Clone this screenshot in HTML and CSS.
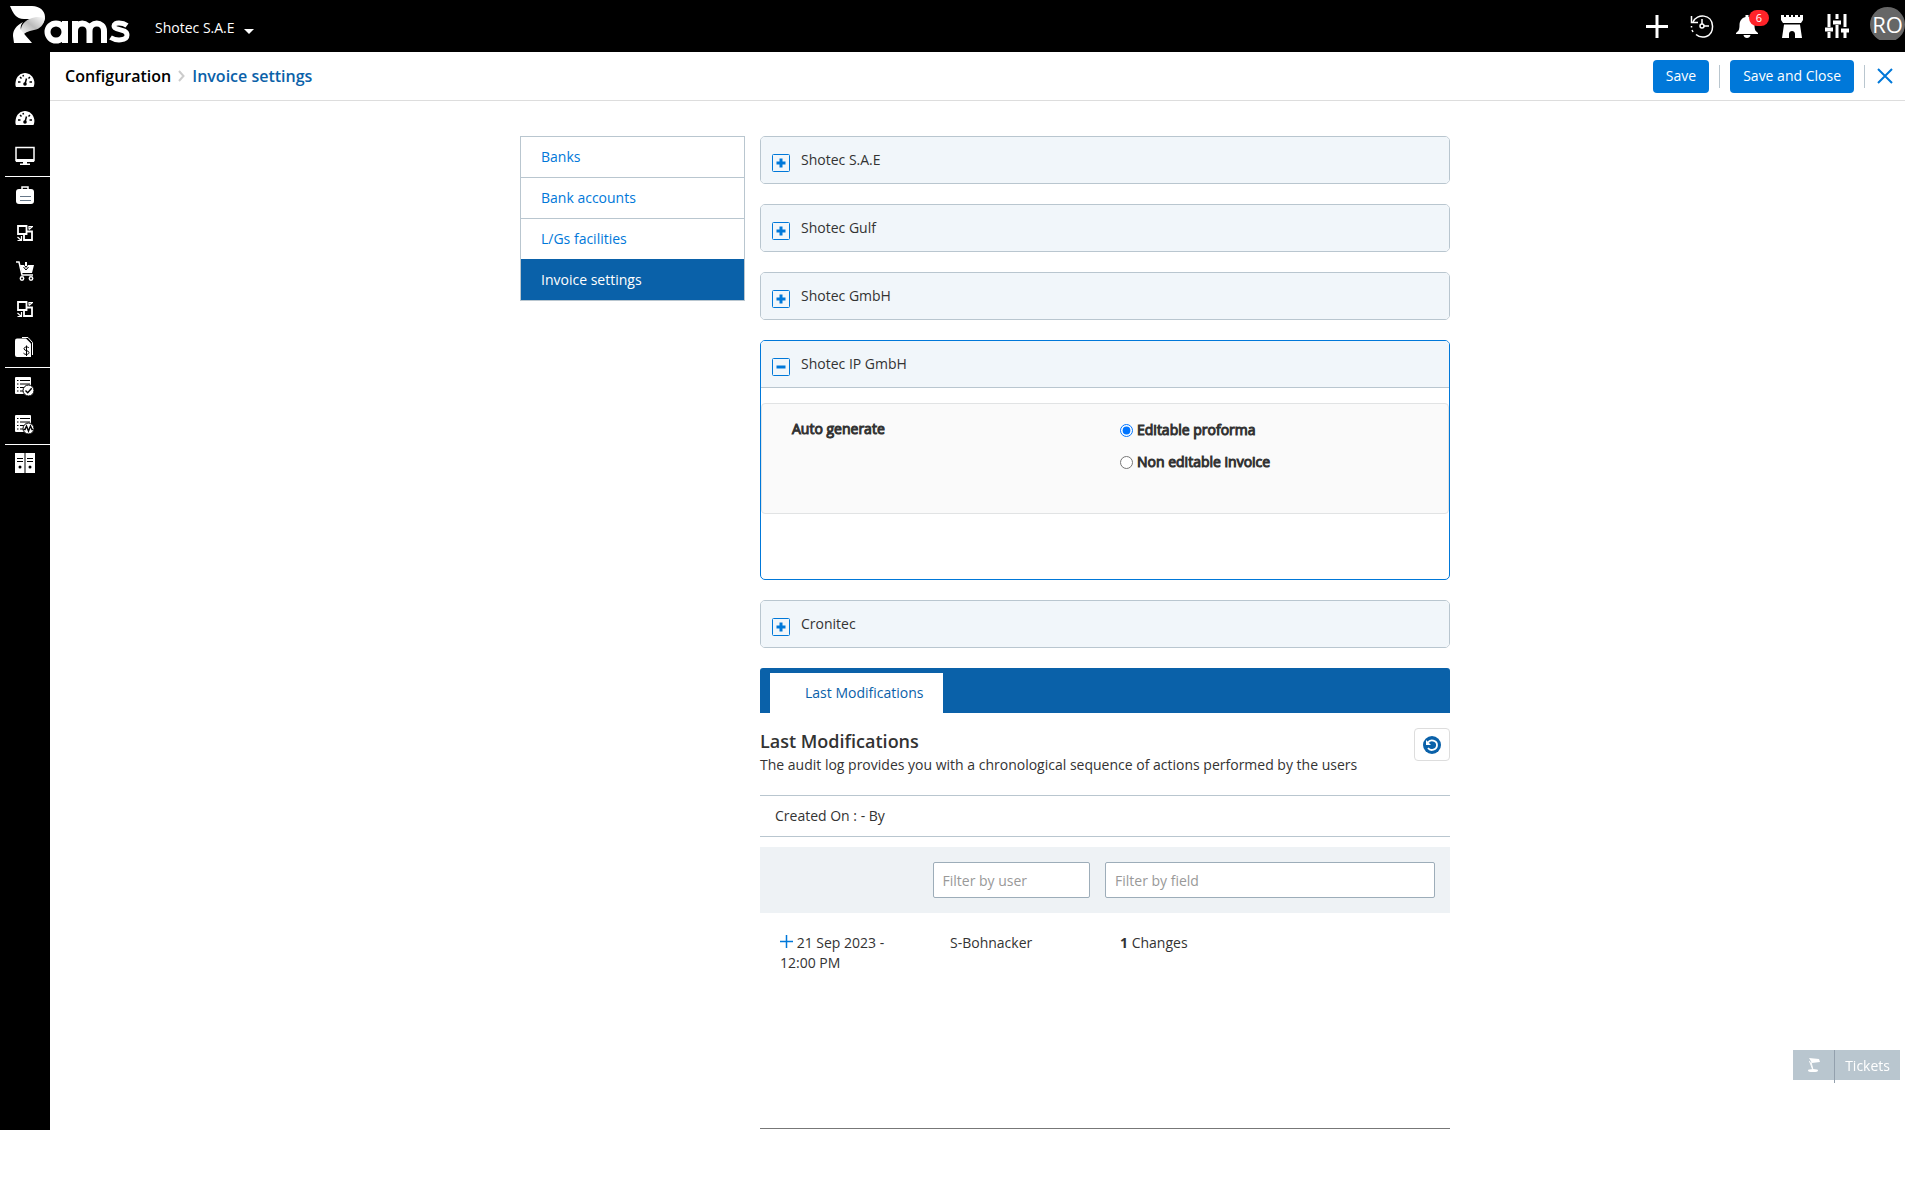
FILE: index.html
```html
<!DOCTYPE html>
<html lang="en">
<head>
    <meta charset="UTF-8">
    <meta name="viewport" content="width=device-width, initial-scale=1.0">
    <title>Invoice settings</title>
    <link rel="stylesheet" href="styles.css">
</head>
<body>
    <!-- shared icons -->
    <svg class="sprite" aria-hidden="true">
        <symbol id="gauge" viewBox="0 0 20 20">
            <path fill="#fff" d="M1 17C0 15 .5 13 .7 11.500C1.500 6.500 5.500 3 10 3s8.500 3.500 9.300 8.500c.2 1.500.2 3.500-.8 5.500z"/>
            <path stroke="#000" stroke-width="1.500" fill="none" d="M3 12h2.500M14.500 12H17M5 7l1.500 1.500M15 7l-1.500 1.500M8 5l.5 1.500M11.500 8.500L10 14"/>
            <circle cx="10" cy="14" r="1.800"/>
        </symbol>
        <symbol id="squares" viewBox="0 0 20 20">
            <path fill="none" stroke="#fff" stroke-width="1.800" d="M3 3h8.500v8H3zM12 8.500h5V17H9v-5.500"/>
            <path fill="none" stroke="#fff" stroke-width="1.200" d="M14 3.500h4M14 3v3.500M14 6.500l3.500-3M6.500 13v4.500h-4M2.500 14l4 3.500"/>
        </symbol>
        <symbol id="plus-box" viewBox="0 0 18 18">
            <rect x=".5" y=".5" width="17" height="17" rx="1" fill="none" stroke="#0078d9"/>
            <path stroke="#0078d9" stroke-width="3" d="M4.500 9h9M9 4.500v9"/>
        </symbol>
    </svg>

    <header class="topbar">
        <a href="#" class="logo" aria-label="Pams">
            <svg width="120" height="40" viewBox="0 0 120 40">
                <defs>
                    <linearGradient id="fold" x1="0" y1="1" x2="1" y2="0">
                        <stop offset="0" stop-color="#fff"/>
                        <stop offset=".5" stop-color="#bbb"/>
                        <stop offset="1" stop-color="#fff"/>
                    </linearGradient>
                </defs>
                <path fill="#fff" d="M0 0h22c8 0 13 5 13 11 0 2-1 4-2 6-2-4-5-4-9-4H14C6 13 3 7 0 0z"/>
                <path fill="url(#fold)" d="M13 18c4-5 10-7 15-7 4 0 6 1 7 1-1 7-5 11-11 12-6 1-10 3-12 6-1-4-2-8 1-12z"/>
                <path fill="#fff" d="M13 16C6 20 3 24 3 30l1 7h18c-4-5-8-9-11-13-1-3 0-6 2-8z"/>
                <g fill="none" stroke="#fff" stroke-width="6">
                    <circle cx="46" cy="26" r="8.500"/>
                    <path d="M55 15v22M65 37V15M65 25c0-10 14.500-10 14.500 0v12M79.500 25c0-10 14.500-10 14.500 0v12"/>
                    <path stroke-width="5" d="M117 19.500c-4-3-13-4-13 .5 0 5 13 2 13 9 0 6-11 6-16.500 2.500"/>
                </g>
            </svg>
        </a>
        <button type="button" class="company">Shotec S.A.E <span class="caret"></span></button>
        <nav class="tools" aria-label="Tools">
            <a href="#" aria-label="Add">
                <svg width="24" height="24" viewBox="0 0 24 24"><path stroke="#fff" stroke-width="3" d="M1 12.500h22M12 1v23"/></svg>
            </a>
            <a href="#" aria-label="History">
                <svg width="24" height="24" viewBox="0 0 24 24" fill="none" stroke="#fff" stroke-width="1.500">
                    <path d="M3 8C7-1 22 0 22.500 12S11 25 6 20.500"/><path d="M1.500 2v6.500H8M12 5v5M14 12h5M2 16l1 2M1.500 12v1.500"/><circle cx="12" cy="12" r="2"/>
                </svg>
            </a>
            <a href="#" class="bell" aria-label="Notifications">
                <svg width="24" height="24" viewBox="0 0 24 24" fill="#fff">
                    <path d="M10.500 1h3v2c4 1 6 4 6 8 0 5 1 6 3.500 8v1H1v-1c2.500-2 3.500-3 3.500-8 0-4 2-7 6-8zM8.500 21h7c-.5 4-6.500 4-7 0z"/>
                </svg>
                <span class="badge">6</span>
            </a>
            <a href="#" aria-label="Tower">
                <svg width="24" height="24" viewBox="0 0 24 24" fill="#fff">
                    <path d="M1 1h3v2h2V1h3v2h2V1h2v2h2V1h3v2h2V1h3v5l-2 3H3L1 6z"/><path d="M4 10.500h16L22 24h-7v-4c0-4-6-4-6 0v4H2z"/>
                </svg>
            </a>
            <a href="#" aria-label="Settings">
                <svg width="24" height="24" viewBox="0 0 24 24">
                    <path stroke="#fff" stroke-width="3" d="M4 0v13M4 18v6M12 0v5M12 11v13M20 0v13M20 18v6"/>
                    <path stroke="#fff" stroke-width="4" d="M0 15.500h8M8 8.500h8M16 16.500h8"/>
                </svg>
            </a>
            <a href="#" class="avatar"><span>RO</span></a>
        </nav>
    </header>

    <div class="shell">
        <nav class="sidebar" aria-label="Main">
            <div class="group">
                <a href="#" aria-label="Dashboard"><svg><use href="#gauge"/></svg></a>
                <a href="#" aria-label="Reports"><svg><use href="#gauge"/></svg></a>
                <a href="#" aria-label="Monitor">
                    <svg viewBox="0 0 20 20"><path fill="none" stroke="#fff" stroke-width="1.500" d="M1 1.500h18v13H1z"/><path fill="#fff" d="M1 13h18v3H1zM8 16h4v1.500h3V19H5v-1.500h3z"/></svg>
                </a>
            </div>
            <div class="group">
                <a href="#" aria-label="Projects">
                    <svg viewBox="0 0 20 20"><path fill="none" stroke="#fff" stroke-width="1.500" d="M7 5V2h6v3"/><rect x="1" y="4" width="18" height="15" rx="3" fill="#fff"/><path stroke="#678" d="M5 11.500h11M5 15.500h11"/></svg>
                </a>
                <a href="#" aria-label="Transfers"><svg><use href="#squares"/></svg></a>
                <a href="#" aria-label="Purchases">
                    <svg viewBox="0 0 20 20"><path fill="none" stroke="#fff" stroke-width="1.500" d="M1 1h3l3 13h11"/><path fill="#fff" d="M5 4h4l2 3 2-3h6l-2 8H7z"/><path stroke="#fff" stroke-width="2" d="M11 1v4"/><path stroke="#000" d="M8.500 6l2.500 3 2.500-3" fill="none"/><g fill="none" stroke="#fff" stroke-width="1.500"><circle cx="7" cy="17.500" r="1.700"/><circle cx="16" cy="17.500" r="1.700"/></g></svg>
                </a>
                <a href="#" aria-label="Orders"><svg><use href="#squares"/></svg></a>
                <a href="#" aria-label="Invoices">
                    <svg viewBox="0 0 20 20"><path fill="#fff" d="M2 1.500h9l5 5V20H2q-2 0-2-2V3.500q0-2 2-2z"/><path fill="none" stroke="#fff" d="M7 .5h6l4.500 5V18"/><path fill="none" stroke="#000" d="M14 11c-1-1.500-5-1.500-5 .8s5 1.400 5 3.700-4 2.500-5.500.7M11.500 8.500V19"/></svg>
                </a>
            </div>
            <div class="group">
                <a href="#" aria-label="Approvals">
                    <svg viewBox="0 0 20 20"><rect y="1" width="16" height="17" rx="1" fill="#fff"/><path stroke="#000" stroke-dasharray="1.500 1.500 12" d="M2 4.500h13M2 8h13M2 11.500h13M2 15h13"/><circle cx="13.500" cy="14.500" r="5.500" fill="#fff" stroke="#000"/><path fill="none" stroke="#000" stroke-width="1.400" d="M10.500 14.500l2.200 2.200 4-4.500"/></svg>
                </a>
                <a href="#" aria-label="Activity">
                    <svg viewBox="0 0 20 20"><rect y="1" width="16" height="17" rx="1" fill="#fff"/><path stroke="#000" stroke-dasharray="1.500 1.500 12" d="M2 4.500h13M2 8h13M2 11.500h13M2 15h13"/><circle cx="13.500" cy="14.500" r="5.500" fill="#fff" stroke="#000"/><path fill="none" stroke="#000" stroke-width="1.400" d="M8.500 15.500h1.500l1.500-3.500 2 5 2-5 1.500 3.500H18"/></svg>
                </a>
            </div>
            <div class="group">
                <a href="#" aria-label="Archive">
                    <svg viewBox="0 0 20 20"><path fill="#fff" d="M0 0h9.500v20H0zM10.500 0H20v20h-9.500z"/><path stroke="#000" d="M2 5.500h6M2 8.500h6M12 5.500h6M12 8.500h6"/><circle cx="5" cy="14" r="1.500"/><circle cx="15" cy="14" r="1.500"/></svg>
                </a>
            </div>
        </nav>

        <main class="main">
            <div class="titlebar">
                <div class="breadcrumb">
                    <a href="#">Configuration</a>
                    <svg width="7" height="12" viewBox="0 0 7 12" fill="none" stroke="#ccc" stroke-width="2"><path d="M1 1l4.500 5L1 11"/></svg>
                    <span class="current">Invoice settings</span>
                </div>
                <div class="actions">
                    <button type="button" class="btn">Save</button>
                    <span class="divider"></span>
                    <button type="button" class="btn">Save and Close</button>
                    <span class="divider"></span>
                    <a href="#" class="close" aria-label="Close">
                        <svg width="16" height="16" viewBox="0 0 16 16" stroke="#0078d9" stroke-width="2"><path d="M1 1l14 14M15 1L1 15"/></svg>
                    </a>
                </div>
            </div>

            <div class="container">
                <nav class="side-menu" aria-label="Configuration">
                    <a href="#">Banks</a>
                    <a href="#">Bank accounts</a>
                    <a href="#">L/Gs facilities</a>
                    <a href="#" class="active">Invoice settings</a>
                </nav>

                <div class="content">
                    <section class="panel">
                        <button type="button" class="panel-header"><svg><use href="#plus-box"/></svg><span>Shotec S.A.E</span></button>
                    </section>
                    <section class="panel">
                        <button type="button" class="panel-header"><svg><use href="#plus-box"/></svg><span>Shotec Gulf</span></button>
                    </section>
                    <section class="panel">
                        <button type="button" class="panel-header"><svg><use href="#plus-box"/></svg><span>Shotec GmbH</span></button>
                    </section>
                    <section class="panel open">
                        <button type="button" class="panel-header">
                            <svg viewBox="0 0 18 18"><rect x=".5" y=".5" width="17" height="17" rx="1" fill="none" stroke="#0078d9"/><path stroke="#0078d9" stroke-width="3" d="M4.500 9h9"/></svg>
                            <span>Shotec IP GmbH</span>
                        </button>
                        <div class="panel-body">
                            <div class="well" role="radiogroup" aria-labelledby="autoGenerate">
                                <span id="autoGenerate">Auto generate</span>
                                <div class="options">
                                    <label for="proforma"><input type="radio" name="generate" id="proforma" checked>Editable proforma</label>
                                    <label for="invoice"><input type="radio" name="generate" id="invoice">Non editable invoice</label>
                                </div>
                            </div>
                        </div>
                    </section>
                    <section class="panel">
                        <button type="button" class="panel-header"><svg><use href="#plus-box"/></svg><span>Cronitec</span></button>
                    </section>

                    <div class="tabs">
                        <a href="#log" class="tab">Last Modifications</a>
                    </div>

                    <section class="log" id="log">
                        <div class="log-header">
                            <div>
                                <h2>Last Modifications</h2>
                                <p>The audit log provides you with a chronological sequence of actions performed by the users</p>
                            </div>
                            <button type="button" class="refresh" aria-label="Refresh">
                                <svg width="18" height="18" viewBox="0 0 18 18"><circle cx="9" cy="9" r="9" fill="#0a61a9"/><path fill="none" stroke="#fff" stroke-width="1.800" d="M5 6.500C7 3 14 4 14 9s-6.500 6.500-9 3"/><path fill="#fff" d="M3 4v5h5z"/><circle cx="9.500" cy="9" r="1" fill="#0a61a9"/></svg>
                            </button>
                        </div>
                        <p class="created">Created On : - By</p>
                        <div class="filters">
                            <input type="text" class="by-user" placeholder="Filter by user" aria-label="Filter by user">
                            <input type="text" class="by-field" placeholder="Filter by field" aria-label="Filter by field">
                        </div>
                        <div class="entry">
                            <div><svg width="13" height="13" viewBox="0 0 13 13" stroke="#0078d9" stroke-width="1.500"><path d="M0 6.500h13M6.500 0v13"/></svg> 21 Sep 2023 - 12:00 PM</div>
                            <div>S-Bohnacker</div>
                            <div><b>1</b> Changes</div>
                        </div>
                    </section>
                </div>
            </div>
        </main>
    </div>

    <button type="button" class="tickets">
        <span class="lamp"><svg width="14" height="14" viewBox="0 0 14 14" fill="#fff"><path d="M2 0l10 1 1 3-8 1z"/><path d="M3 3l3 8H5L2 3z"/><ellipse cx="6" cy="12.500" rx="5" ry="1.500"/><path stroke="#fff" d="M4 4l2 8"/></svg></span>
        <span class="tickets-label">Tickets</span>
    </button>
</body>
</html>
```
FILE: styles.css
```css
* {
    box-sizing: border-box;
}
body {
    margin: 0;
    font-family: "Open Sans", "Noto Sans", sans-serif;
    font-size: 14px;
    line-height: 20px;
    color: #333;
    background: #fff;
}
a {
    color: #0078d9;
    text-decoration: none;
}
button, input {
    font: inherit;
}
button {
    cursor: pointer;
}
.sprite {
    display: none;
}

/* top bar */
.topbar {
    display: flex;
    align-items: center;
    height: 52px;
    background: #000;
}
.logo {
    display: flex;
    width: 154px;
    padding-left: 10px;
}
.company {
    display: flex;
    align-items: center;
    gap: 9px;
    padding: 0 0 0 1px;
    margin-top: 4px;
    border: none;
    background: none;
    color: #fff;
}
.caret {
    margin-top: 6px;
    border: 5px solid transparent;
    border-top-color: #fff;
    border-bottom: none;
}
.tools {
    display: flex;
    align-items: center;
    gap: 21px;
    margin-left: auto;
}
.tools a {
    display: flex;
}
.bell {
    position: relative;
}
.badge {
    position: absolute;
    left: 14px;
    top: -4px;
    width: 20px;
    height: 16px;
    border-radius: 8px;
    background: #ff2329;
    color: #fff;
    font-size: 11px;
    line-height: 16px;
    text-align: center;
}
.tools .avatar {
    width: 35px;
    height: 33px;
    margin-bottom: 5px;
    overflow: hidden;
}
.avatar span {
    width: 35px;
    height: 35px;
    border-radius: 50%;
    background: #666;
    color: #fff;
    font-size: 22px;
    line-height: 35px;
    text-align: center;
}

/* left icon bar */
.shell {
    display: flex;
    min-height: 1078px;
}
.sidebar {
    flex: none;
    width: 50px;
    padding: 10px 0 0 5px;
    background: #000;
}
.group + .group {
    border-top: 1px solid #fff;
}
.sidebar a {
    display: flex;
    align-items: center;
    height: 38px;
    padding: 0 0 2px 10px;
}
.sidebar svg {
    width: 20px;
    height: 20px;
}

.main {
    flex: 1;
}
.titlebar {
    display: flex;
    align-items: center;
    justify-content: space-between;
    height: 49px;
    padding: 0 12px 0 15px;
    border-bottom: 1px solid #ddd;
}
.breadcrumb {
    display: flex;
    align-items: center;
    gap: 7px;
    font-size: 16px;
    font-weight: 600;
}
.breadcrumb a {
    color: #000;
}
.current {
    color: #0a61a9;
}
.actions {
    display: flex;
    align-items: center;
    gap: 10px;
}
.btn {
    height: 33px;
    padding: 0 13px;
    border: none;
    border-radius: 4px;
    background: #0078d9;
    color: #fff;
}
.divider {
    width: 1px;
    height: 23px;
    background: #b9c6cf;
}
.close {
    display: flex;
    padding-left: 2px;
}

/* settings */
.container {
    display: flex;
    align-items: flex-start;
    gap: 15px;
    max-width: 945px;
    margin: 0 auto;
    padding: 35px 0 0 15px;
}
.side-menu {
    flex: none;
    width: 225px;
    border: 1px solid #b9c6cf;
}
.side-menu a {
    display: block;
    padding: 10px 20px;
}
.side-menu a + a {
    border-top: 1px solid #b9c6cf;
}
.side-menu a.active {
    border-color: #0a61a9;
    background: #0a61a9;
    color: #fff;
}
.content {
    flex: 1;
}
.panel {
    margin-bottom: 20px;
    border: 1px solid #b9c6cf;
    border-radius: 5px;
    overflow: hidden;
}
.panel-header {
    display: flex;
    gap: 11px;
    width: 100%;
    height: 46px;
    padding: 13px 11px;
    border: none;
    background: #f1f6fa;
    color: #333;
    text-align: left;
}
.panel-header svg {
    width: 18px;
    height: 18px;
    margin-top: 4px;
}
.open {
    border-color: #0078d9;
}
.panel-body {
    padding: 15px 0 65px;
    border-top: 1px solid #b9c6cf;
}
.well {
    display: grid;
    grid-template-columns: 328px 1fr;
    min-height: 111px;
    padding: 15px 30px;
    border: 1px solid #e1e3e4;
    border-radius: 4px;
    background: #fafafa;
    -webkit-text-stroke: 1px #333;
}
.options label {
    display: flex;
    align-items: center;
    gap: 4px;
    margin: 1px 0 12px;
}
.options input {
    width: 13px;
    height: 13px;
    margin: 0;
}

/* audit log */
.tabs {
    display: flex;
    height: 45px;
    padding: 5px 10px 0;
    border-radius: 3px 3px 0 0;
    background: #0a61a9;
}
.tab {
    padding: 10px 20px 10px 35px;
    background: #fff;
    color: #0a61a9;
}
.log {
    min-height: 416px;
    border-bottom: 1px solid #777;
}
.log-header {
    display: flex;
    justify-content: space-between;
    align-items: flex-start;
    padding: 15px 0 20px;
}
.log h2 {
    margin: 2px 0 3px;
    font-size: 18px;
    font-weight: 600;
    line-height: 22px;
}
.log p {
    margin: 0;
}
.refresh {
    width: 36px;
    height: 33px;
    padding: 7px 8px;
    border: 1px solid #ddd;
    border-radius: 4px;
    background: #fff;
    line-height: 0;
}
.log .created {
    margin-bottom: 10px;
    padding: 10px 15px;
    border: solid #b9c6cf;
    border-width: 1px 0;
}
.filters {
    display: grid;
    grid-template-columns: 1fr 1fr 2fr;
    padding: 15px 0;
    background: #eef2f5;
}
.filters input {
    min-width: 0;
    height: 36px;
    margin-right: 15px;
    padding: 0 9px;
    border: 1px solid #9dadb9;
    border-radius: 2px;
    background: #fff;
}
.filters .by-user {
    grid-column: 2;
}
.filters input::placeholder {
    color: #999;
}
.entry {
    display: grid;
    grid-template-columns: 170px 170px 1fr;
    padding: 20px 0 0 20px;
}
.entry div {
    padding-right: 40px;
}

/* floating button */
.tickets {
    position: fixed;
    right: 5px;
    top: 1050px;
    display: flex;
    align-items: center;
    height: 30px;
    padding: 0;
    border: none;
    background: #b9c6cf;
    color: #fff;
}
.lamp {
    width: 41px;
    line-height: 0;
}
.tickets-label {
    align-self: flex-start;
    height: 33px;
    padding: 6px 10px;
    border-left: 1px solid #93a0ad;
}
```
